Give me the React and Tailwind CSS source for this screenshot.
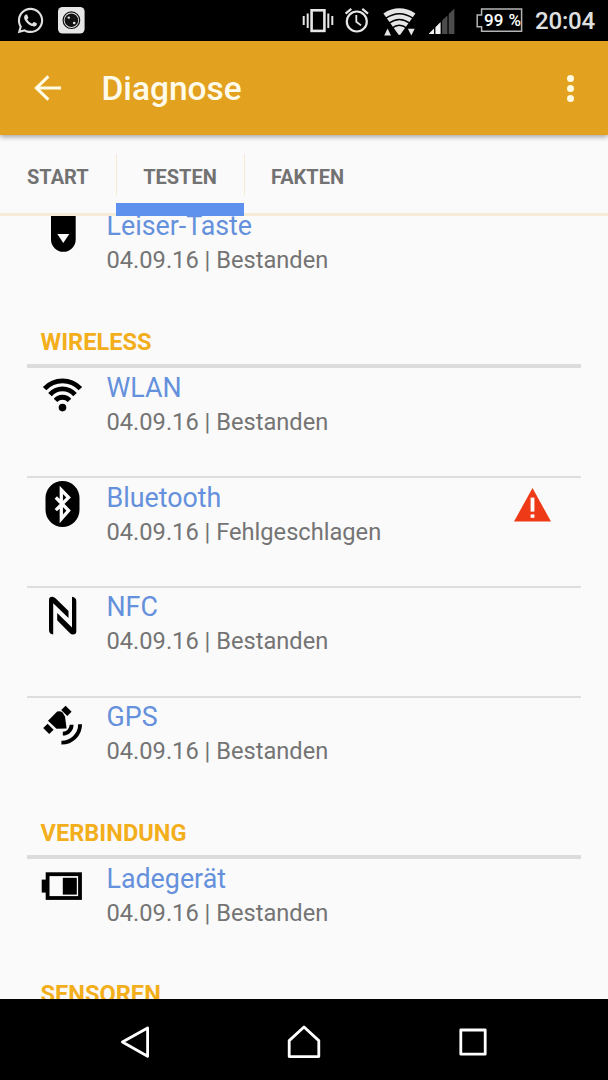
import React from 'react';
import { FaWhatsapp } from 'react-icons/fa';

const VolumeDownIcon = () => (
  <svg viewBox="0 0 46 60" className="w-[46px] h-[60px]">
    <path d="M11 0H35.7V32.4A12.3 12.3 0 0 1 11 32.4Z" />
    <path d="M17.3 26.9H29.3L23.3 35.9Z" fill="#fafafa" />
  </svg>
);

const WifiIcon = () => (
  <svg viewBox="0 0 46 60" className="w-[46px] h-[60px]" fill="none" stroke="#000" strokeWidth="4.8">
    <path d="M4.6 20.6A24.5 24.5 0 0 1 40.4 20.6" />
    <path d="M10 26.6A16.5 16.5 0 0 1 35 26.6" />
    <path d="M15.5 32.4A9.4 9.4 0 0 1 29.5 32.4" />
    <circle cx="22.5" cy="39.6" r="3.8" fill="#000" stroke="none" />
  </svg>
);

const BluetoothIcon = () => (
  <svg viewBox="0 0 46 60" className="w-[46px] h-[60px]">
    <rect x="5.5" y="3" width="34" height="46" rx="17" />
    <path
      d="M15.8 19.5L28.6 32.5L21.3 40.8V11.9L28.6 19.5L15.8 32.2"
      fill="none"
      stroke="#fafafa"
      strokeWidth="3.3"
    />
  </svg>
);

const NfcIcon = () => (
  <svg viewBox="0 0 46 60" className="w-[46px] h-[60px]">
    <path d="M9 12Q9 8.7 12.3 8.7Q14 8.7 15.5 10.2L28.5 22.9V30L13.2 15.2V46.5Q9 46 9 42Z" />
    <path d="M36.3 43.3Q36.3 46.6 33 46.6Q31.4 46.6 30 45.2L17.2 32.3V25L32 39.5V8.7Q36.3 9.3 36.3 13.2Z" />
  </svg>
);

const GpsIcon = () => (
  <svg viewBox="0 0 46 60" className="w-[46px] h-[60px]">
    <path d="M8 22.8L17.2 13.6Q20 12.6 22.6 14.6L25 18.5L26.6 30.4L16.5 30.8Z" />
    <path d="M25.6 7.8L31.6 13.8L27.3 18.1L21.2 12.1Z" />
    <path d="M7.6 25.7L13.6 31.7L9.2 36L3.2 30Z" />
    <g fill="none" stroke="#000" strokeWidth="3.9">
      <path d="M31.6 26.8A8.8 8.8 0 0 1 22.8 35.6" />
      <path d="M40.1 26.2A18.4 18.4 0 0 1 21.4 44.6" />
    </g>
  </svg>
);

const BatteryIcon = () => (
  <svg viewBox="0 0 46 60" className="w-[46px] h-[60px]">
    <rect x="7.6" y="15.2" width="32.4" height="23.8" fill="none" stroke="#000" strokeWidth="3.8" />
    <rect x="1.7" y="20.6" width="5" height="13" />
    <rect x="22.8" y="18.8" width="14" height="16.8" />
  </svg>
);

const WarningIcon = () => (
  <svg viewBox="0 0 37 34" className="w-[37px] h-[34px]">
    <path d="M18.5 0L37 33.6H0Z" fill="#ee3a17" />
    <rect x="16.6" y="9.6" width="3.8" height="14" fill="#fff" />
    <rect x="16.6" y="26.4" width="3.8" height="3.4" fill="#fff" />
  </svg>
);

const sections = [
  {
    items: [{ name: 'Leiser-Taste', status: 'Bestanden', Icon: VolumeDownIcon }],
  },
  {
    title: 'WIRELESS',
    items: [
      { name: 'WLAN', status: 'Bestanden', Icon: WifiIcon },
      { name: 'Bluetooth', status: 'Fehlgeschlagen', Icon: BluetoothIcon, failed: true },
      { name: 'NFC', status: 'Bestanden', Icon: NfcIcon },
      { name: 'GPS', status: 'Bestanden', Icon: GpsIcon },
    ],
  },
  {
    title: 'VERBINDUNG',
    items: [{ name: 'Ladegerät', status: 'Bestanden', Icon: BatteryIcon }],
  },
  { title: 'SENSOREN', items: [] },
];

function StatusBar() {
  return (
    <div className="h-[41px] shrink-0 bg-black flex items-start pl-4 pr-[14px] text-[#e0e0e0]">
      <FaWhatsapp className="w-[29px] h-[29px] mt-1.5" />
      <svg viewBox="0 0 27 27" className="w-[27px] h-[27px] mt-[7px] ml-[12.5px]">
        <rect width="26.6" height="26.6" rx="4.5" fill="#e6e6e6" />
        <circle cx="13.4" cy="13.2" r="8.3" fill="none" stroke="#111" strokeWidth="1.2" />
        <circle cx="13.4" cy="13.2" r="6.8" fill="#111" />
        <circle cx="10.8" cy="10.6" r="1.2" fill="#e6e6e6" />
        <circle cx="16.2" cy="16" r="1.3" fill="#e6e6e6" />
      </svg>

      <div className="ml-auto flex items-start">
        {/* vibrate */}
        <svg viewBox="0 0 32 41" className="w-8 h-[41px]" fill="none" stroke="#e6e6e6">
          <rect x="9.6" y="10.3" width="12.8" height="20.6" strokeWidth="2.6" />
          <path d="M1.7 16V25M5.7 13.5V28M26.3 13.5V28M30.3 16V25" strokeWidth="2" />
        </svg>
        {/* alarm */}
        <svg viewBox="0 0 26 41" className="w-[26px] h-[41px] ml-[10px]" fill="none" stroke="#e6e6e6" strokeWidth="2.2">
          <circle cx="12.8" cy="21.5" r="10" />
          <path d="M12.3 15V21.8L17 25.4" strokeWidth="1.8" />
          <path d="M1.6 13.6L7.3 8.9M24 13.6L18.3 8.9" />
        </svg>
        {/* wifi */}
        <svg viewBox="0 0 34 41" className="w-[34px] h-[41px] ml-[13px]">
          <path d="M.4 13.4Q16.4 3.2 32.4 13.4L17.6 34.2Q16.4 35.6 15.2 34.2Z" fill="#e6e6e6" />
          <g fill="none" stroke="#000" strokeWidth="1.5">
            <path d="M2.5 18.4Q16.4 9 30.3 18.4" />
            <path d="M6 23.2Q16.4 15.8 26.8 23.2" />
            <path d="M9 28.2Q16.4 22.4 23.8 28.2" />
          </g>
          <path d="M4.6 28.6L8 35.4H1.2Z" fill="#e6e6e6" />
          <path d="M24.9 28.8H31.7L28.3 35.4Z" fill="#e6e6e6" />
        </svg>
        {/* mobile signal */}
        <svg viewBox="0 0 27 41" className="w-[27px] h-[41px] ml-3">
          <path d="M0 34V33.5L5 28.6V34ZM6.4 34V27.2L11.6 22V34Z" fill="#f2f2f2" />
          <path d="M13.1 34V20.6L18.4 15.4V34ZM19.7 34V14L25.4 8.6V34Z" fill="#4c4c4c" />
        </svg>
        {/* battery */}
        <div className="relative w-[47px] h-[41px] ml-5">
          <svg viewBox="0 0 47 41" className="w-[47px] h-[41px]" fill="none" stroke="#b5b5b5" strokeWidth="1.5">
            <path d="M5.6 8.9H45.6V31.2H5.6V26.8H1.2V15H5.6Z" />
          </svg>
          <span className="absolute left-[8px] top-[10px] text-[17px] leading-5 font-medium [word-spacing:1px] text-white whitespace-nowrap">
            99 %
          </span>
        </div>
        <span className="ml-3 mt-[7px] w-[59px] text-[24px] leading-7 font-medium tracking-[-0.2px] whitespace-nowrap">
          20:04
        </span>
      </div>
    </div>
  );
}

function AppBar() {
  return (
    <header className="relative z-10 h-[94px] shrink-0 bg-[#e2a11f] flex items-center pl-[34px] pr-[34px] shadow-[0_2px_5px_rgba(0,0,0,0.35)]">
      <svg viewBox="0 0 27 26" className="w-[27px] h-[26px]" fill="none" stroke="#fffbe6" strokeWidth="3.1">
        <path d="M14.4 1.4L2.4 13L14.4 24.6M1.4 13H27" />
      </svg>
      <h1 className="ml-[40.5px] mt-[2px] text-[33.5px] leading-10 font-medium text-[#fffbea]">Diagnose</h1>
      <div className="ml-auto flex flex-col gap-[3px]">
        <span className="w-[7px] h-[7px] rounded-full bg-[#fffbe0]" />
        <span className="w-[7px] h-[7px] rounded-full bg-[#fffbe0]" />
        <span className="w-[7px] h-[7px] rounded-full bg-[#fffbe0]" />
      </div>
    </header>
  );
}

function Tabs() {
  return (
    <nav className="h-[81px] shrink-0 flex text-[20px] leading-6 font-bold text-[#727272] border-b-[3px] border-[#f5ecd8]">
      <div className="w-[116px] pl-[27px] pt-[30px]">START</div>
      <div className="w-32 h-[81px] flex flex-col">
        <div className="mt-[19px] h-[41px] pt-[11px] pr-px text-center border-l border-[#f5ead3]">TESTEN</div>
        <div className="mt-auto h-[13px] bg-[#5e90ee]" />
      </div>
      <div className="mt-[19px] h-[41px] pt-[11px] pl-[26px] border-l border-[#f5ead3]">FAKTEN</div>
    </nav>
  );
}

function TestRow({ name, status, Icon, failed, last }) {
  return (
    <div className={`h-[109.75px] flex items-start pl-[13px] ${last ? '' : 'border-b-2 border-[#dedede]'}`}>
      <Icon />
      <div className="ml-[20.5px] pt-[2.6px]">
        <div className="text-[26.8px] leading-[34px] text-[#6490dc]">{name}</div>
        <div className="text-[23.65px] leading-[34px] text-[#747474]">04.09.16 | {status}</div>
      </div>
      {failed && (
        <div className="ml-auto mr-[30.5px] mt-[10px]">
          <WarningIcon />
        </div>
      )}
    </div>
  );
}

export default function App() {
  return (
    <div
      className="w-[608px] h-[1080px] flex flex-col overflow-hidden bg-[#fafafa]"
      style={{ fontFamily: 'Roboto, sans-serif' }}
    >
      <StatusBar />
      <AppBar />
      <Tabs />

      <main className="flex-1 min-h-0 overflow-hidden px-[27px]">
        <div className="-mt-[9.4px]">
          {sections.map(({ title, items }, i) => (
            <section key={i}>
              {title && (
                <h2 className="h-[51.9px] pl-[13.5px] pt-[11.5px] text-[23.6px] leading-7 font-bold text-[#f3ae1b] border-b-4 border-[#dcdcdc]">
                  {title}
                </h2>
              )}
              {items.map((item, j) => (
                <TestRow key={item.name} {...item} last={j === items.length - 1} />
              ))}
            </section>
          ))}
        </div>
      </main>

      <footer className="h-[81px] shrink-0 bg-black flex items-center justify-between pl-[120px] pr-[121px] pt-1">
        <svg viewBox="0 0 30 34" className="w-[30px] h-[34px]" fill="none" stroke="#fff" strokeWidth="2.8" strokeLinejoin="round">
          <path d="M27.6 3L2.4 17L27.6 31.2Z" />
        </svg>
        <svg viewBox="0 0 34 34" className="w-[34px] h-[34px] -ml-0.5" fill="none" stroke="#fff" strokeWidth="2.8" strokeLinejoin="round">
          <path d="M17 2L31.8 15.6V31.6H2.2V15.6Z" />
        </svg>
        <svg viewBox="0 0 28 28" className="w-7 h-7" fill="none" stroke="#fff" strokeWidth="2.8" strokeLinejoin="round">
          <rect x="1.8" y="2" width="24.4" height="24.2" />
        </svg>
      </footer>
    </div>
  );
}
